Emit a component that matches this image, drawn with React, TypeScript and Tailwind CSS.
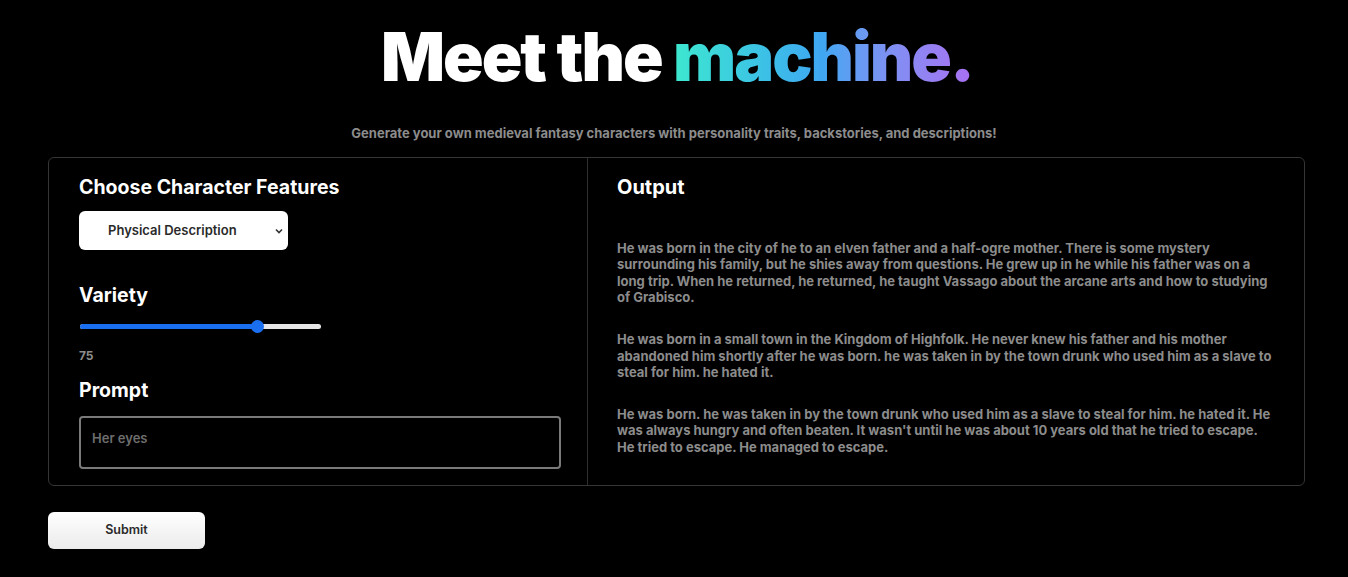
const stories = [
  "He was born in the city of he to an elven father and a half-ogre mother. There is some mystery surrounding his family, but he shies away from questions. He grew up in he while his father was on a long trip. When he returned, he returned, he taught Vassago about the arcane arts and how to studying of Grabisco.",
  "He was born in a small town in the Kingdom of Highfolk. He never knew his father and his mother abandoned him shortly after he was born. he was taken in by the town drunk who used him as a slave to steal for him. he hated it.",
  "He was born. he was taken in by the town drunk who used him as a slave to steal for him. he hated it. He was always hungry and often beaten. It wasn't until he was about 10 years old that he tried to escape. He tried to escape. He managed to escape.",
];

export default function App() {
  const variety = 75;

  return (
    <div className="min-h-[577px] w-full bg-black font-['Inter',sans-serif] text-white">
      {/* hero */}
      <div className="flex flex-col items-center pt-[18px]">
        <h1 className="ml-[6px] text-[67px] font-black leading-[78px] tracking-[-0.03em]">
          Meet the{" "}
          <span className="bg-gradient-to-r from-[#3ee8cf] via-[#3fa6f2] to-[#a86ff3] bg-clip-text text-transparent">
            machine.
          </span>
        </h1>
        <p className="mt-[28px] text-[13px] font-bold leading-[19px] text-[#8c8c8c]">
          Generate your own medieval fantasy characters with personality traits, backstories, and descriptions!
        </p>
      </div>

      {/* panel */}
      <div className="ml-[48px] mr-[43px] mt-[14px] grid grid-cols-[539px_1fr] rounded-md border border-[#353535]">
        <div className="border-r border-[#2e2e2e] px-[30px] pt-[15px] pb-[16px]">
          <h2 className="text-[19.5px] font-bold leading-[28px]">Choose Character Features</h2>
          <div className="mt-[10px] flex h-[39px] w-[209px] items-center justify-between rounded-md bg-white pl-[29px] pr-[4px] text-[13px] font-semibold text-[#2a2a2a]">
            <span>Physical Description</span>
            <svg width="10" height="10" viewBox="0 0 10 10" fill="none" stroke="#333" strokeWidth="1.6">
              <path d="M2 3.5 L5 6.5 L8 3.5" />
            </svg>
          </div>

          <h2 className="mt-[31px] text-[19.5px] font-bold leading-[28px]">Variety</h2>
          <div className="relative ml-px mt-[11px] h-[13px] w-[241px]">
            <div className="absolute left-0 right-0 top-[4px] h-[5px] rounded-full bg-[#e6e6e6]" />
            <div
              className="absolute left-0 top-[4px] h-[5px] rounded-full bg-[#1a6ff0]"
              style={{ width: `calc(${variety / 100} * (100% - 13px) + 6px)` }}
            />
            <div
              className="absolute top-0 h-[13px] w-[13px] rounded-full bg-[#1a6ff0]"
              style={{ left: `calc(${variety / 100} * (100% - 13px))` }}
            />
          </div>
          <div className="mt-[15px] text-[12px] font-bold leading-[16px] text-[#8c8c8c]">{variety}</div>

          <h2 className="mt-[12px] text-[19.5px] font-bold leading-[28px]">Prompt</h2>
          <div className="mt-[12px] h-[53px] w-[482px] rounded-[4px] border-2 border-[#7a7a7a] px-[11px] pt-[11px] text-[13px] font-semibold text-[#6e6e6e]">
            Her eyes
          </div>
        </div>

        <div className="px-[29px] pt-[15px] pb-[26px]">
          <h2 className="text-[20px] font-bold leading-[28px]">Output</h2>
          <div className="mt-[39px] flex flex-col gap-[25.5px]">
            {stories.map((s, i) => (
              <p key={i} className="w-[660px] text-[13px] font-bold leading-[16.4px] text-[#8c8c8c]">
                {s}
              </p>
            ))}
          </div>
        </div>
      </div>

      <div className="px-[48px] pt-[26px]">
        <button className="h-[37px] w-[157px] rounded-md bg-gradient-to-b from-white to-[#ebebeb] text-[12.5px] font-semibold text-[#2a2a2a]">
          Submit
        </button>
      </div>
    </div>
  );
}
